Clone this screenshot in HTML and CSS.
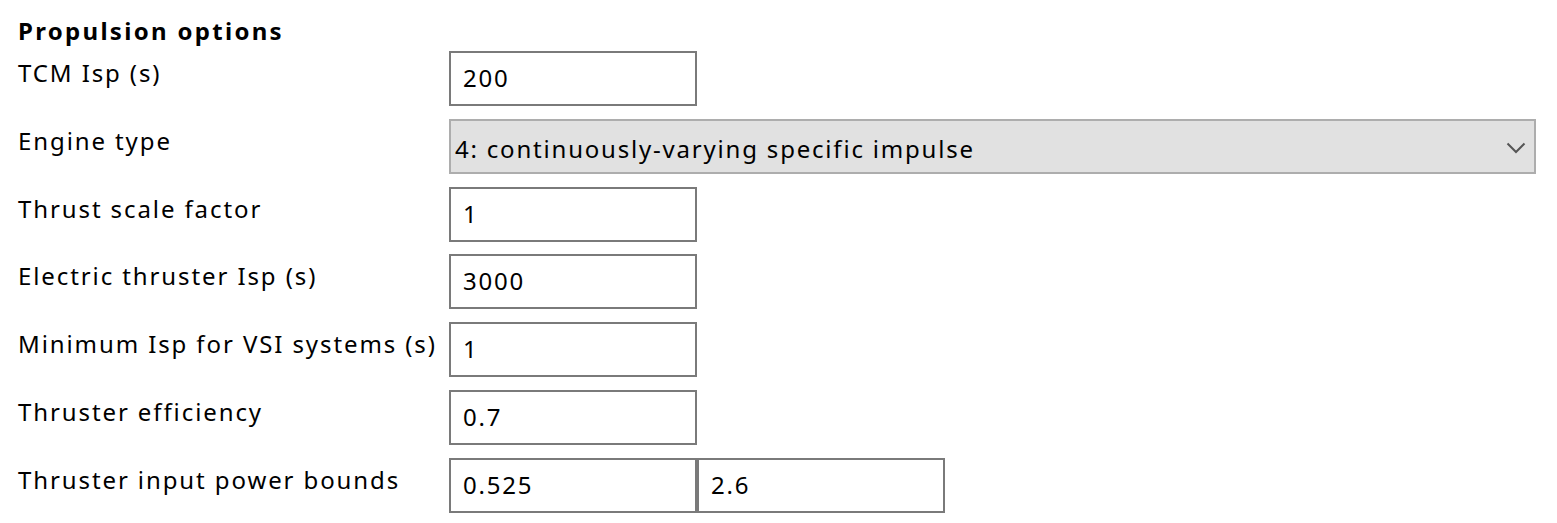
FILE: index.html
```html
<!DOCTYPE html>
<html>
<head>
<meta charset="utf-8">
<link rel="stylesheet" href="styles.css">
</head>
<body>
<div class="panel">
  <div class="title">Propulsion options</div>
  <div class="form">
    <div class="label">TCM Isp (s)</div>
    <div class="field"><div class="box">200</div></div>

    <div class="label">Engine type</div>
    <div class="field"><div class="combo"><span>4: continuously-varying specific impulse</span>
      <svg class="chev" width="20" height="12" viewBox="0 0 20 12"><path d="M1.5 1.5 L10 10 L18.5 1.5" fill="none" stroke="#555" stroke-width="2"/></svg>
    </div></div>

    <div class="label">Thrust scale factor</div>
    <div class="field"><div class="box">1</div></div>

    <div class="label">Electric thruster Isp (s)</div>
    <div class="field"><div class="box">3000</div></div>

    <div class="label">Minimum Isp for VSI systems (s)</div>
    <div class="field"><div class="box">1</div></div>

    <div class="label">Thruster efficiency</div>
    <div class="field"><div class="box">0.7</div></div>

    <div class="label">Thruster input power bounds</div>
    <div class="field"><div class="box">0.525</div><div class="box">2.6</div></div>
  </div>
</div>
</body>
</html>
```

FILE: styles.css
```css
html, body {
  margin: 0;
  padding: 0;
  background: #ffffff;
}
body {
  font-family: "Noto Sans", "Open Sans", sans-serif;
  font-size: 24px;
  letter-spacing: 1.9px;
  color: #000;
}
.panel {
  padding: 14px 0 0 18px;
}
.title {
  font-weight: bold;
  letter-spacing: 2.3px;
  line-height: 34px;
  height: 37px;
  white-space: nowrap;
}
.form {
  display: grid;
  grid-template-columns: 431px 1087px;
  grid-auto-rows: 55px;
  row-gap: 12.8px;
}
.label {
  line-height: 34px;
  padding-top: 5px;
  white-space: nowrap;
}
.field {
  display: flex;
}
.box {
  box-sizing: border-box;
  width: 248px;
  height: 55px;
  border: 2px solid #7a7a7a;
  background: #fff;
  padding-left: 12px;
  line-height: 50px;
  white-space: nowrap;
  letter-spacing: 1.8px;
}
.combo {
  box-sizing: border-box;
  width: 1087px;
  height: 55px;
  border: 2px solid #adadad;
  background: #e1e1e1;
  padding: 0 8px 0 4px;
  line-height: 55px;
  display: flex;
  justify-content: space-between;
  align-items: flex-start;
  white-space: nowrap;
  letter-spacing: 1.8px;
}
.chev {
  display: block;
  margin-top: 21px;
}
```
